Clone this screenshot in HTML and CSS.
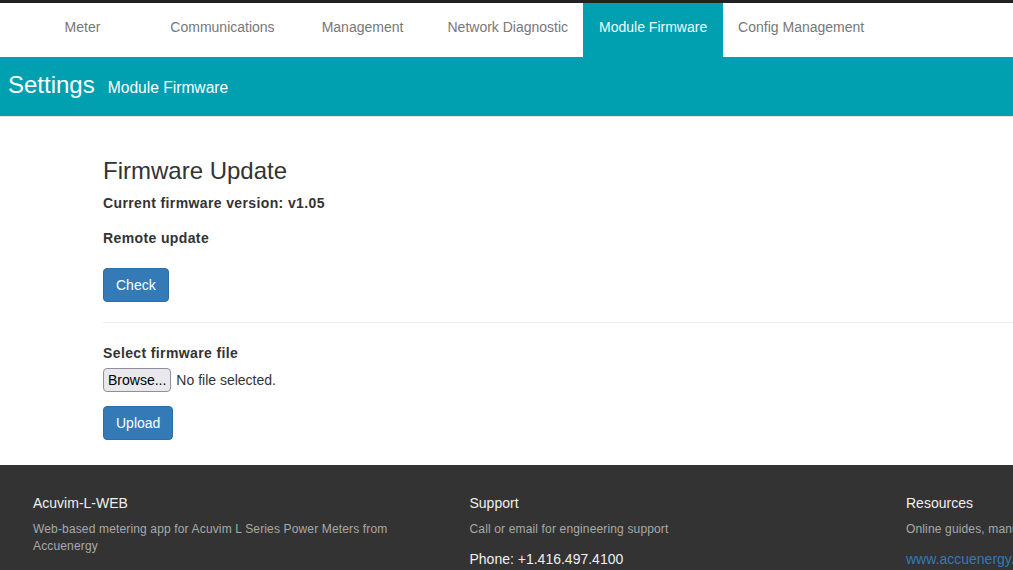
FILE: index.html
```html
<!DOCTYPE html>
<html lang="en">
<head>
<meta charset="utf-8">
<title>Settings - Module Firmware</title>
<link rel="stylesheet" href="styles.css">
</head>
<body>
<div class="topbar"></div>
<nav class="nav">
  <a class="nav-item">Meter</a>
  <a class="nav-item">Communications</a>
  <a class="nav-item">Management</a>
  <a class="nav-item">Network Diagnostic</a>
  <a class="nav-item active">Module Firmware</a>
  <a class="nav-item">Config Management</a>
</nav>
<header class="band">
  <h1 class="band-title">Settings</h1>
  <span class="band-sub">Module Firmware</span>
</header>
<main class="content">
  <h2 class="page-title">Firmware Update</h2>
  <p class="label">Current firmware version: v1.05</p>
  <p class="label label-remote">Remote update</p>
  <button class="btn">Check</button>
  <hr class="divider">
  <p class="label label-select">Select firmware file</p>
  <div class="file-row">
    <button class="browse">Browse...</button>
    <span class="file-name">No file selected.</span>
  </div>
  <button class="btn btn-upload">Upload</button>
</main>
<footer class="footer">
  <div class="footer-col">
    <h3 class="footer-head">Acuvim-L-WEB</h3>
    <p class="footer-text">Web-based metering app for Acuvim L Series Power Meters from Accuenergy</p>
  </div>
  <div class="footer-col">
    <h3 class="footer-head">Support</h3>
    <p class="footer-text">Call or email for engineering support</p>
    <p class="footer-phone">Phone: +1.416.497.4100</p>
  </div>
  <div class="footer-col">
    <h3 class="footer-head">Resources</h3>
    <p class="footer-text">Online guides, manuals and documentation</p>
    <a class="footer-link">www.accuenergy.com</a>
  </div>
</footer>
</body>
</html>
```
FILE: styles.css
```css
html, body {
  margin: 0;
  padding: 0;
  overflow: hidden;
  background: #fff;
}
body {
  font-family: "Liberation Sans", Arial, sans-serif;
  font-size: 14px;
  line-height: 20px;
  color: #333;
  width: 1013px;
}
.topbar {
  height: 3px;
  background: #222;
}
.nav {
  display: flex;
  height: 54px;
  padding-left: 12.5px;
  background: #fff;
}
.nav-item {
  min-width: 140px;
  box-sizing: border-box;
  padding: 14px 15px 0;
  text-align: center;
  color: #777;
  white-space: nowrap;
  cursor: pointer;
}
.nav-item.active {
  background: #00a0b0;
  color: #f2fbfc;
}
.band {
  display: flex;
  align-items: baseline;
  gap: 13px;
  height: 60px;
  box-sizing: border-box;
  padding: 14.5px 0 0 8px;
  background: #00a0b0;
  border-bottom: 1px solid #e4e4e4;
  color: #fff;
}
.band-title {
  margin: 0;
  font-size: 24px;
  line-height: 26.4px;
  font-weight: normal;
}
.band-sub {
  font-size: 15.6px;
}
.content {
  width: 1100px;
  padding: 40.5px 0 25px 103px;
}
.page-title {
  margin: 0 0 9px;
  font-size: 24px;
  line-height: 26.4px;
  font-weight: normal;
  color: #333;
}
.label {
  margin: 0;
  font-weight: bold;
  letter-spacing: 0.38px;
}
.label-remote {
  margin-top: 15px;
  margin-bottom: 20px;
}
.btn {
  display: block;
  padding: 6px 12px;
  font-family: inherit;
  font-size: 14px;
  line-height: 20px;
  color: #fff;
  background: #337ab7;
  border: 1px solid #2e6da4;
  border-radius: 4px;
}
.divider {
  margin: 20px 0;
  border: 0;
  border-top: 1px solid #eee;
}
.label-select {
  margin-bottom: 5px;
}
.file-row {
  display: flex;
  align-items: center;
  gap: 5px;
  margin-bottom: 14px;
}
.browse {
  height: 24px;
  padding: 0 4px;
  font-family: inherit;
  font-size: 14px;
  color: #000;
  background: #e9e9ed;
  border: 1px solid #8f8f9d;
  border-radius: 4px;
}
.file-name {
  color: #333;
}
.footer {
  display: grid;
  grid-template-columns: 436.5px 436.5px 436.5px;
  padding: 27.8px 0 0 33px;
  height: 200px;
  background: #333;
}
.footer-col {
  padding-right: 30px;
}
.footer-head {
  margin: 0 0 8px;
  font-size: 14px;
  line-height: 20px;
  font-weight: normal;
  color: #f0f0f0;
}
.footer-text {
  margin: 0 0 11px;
  font-size: 12px;
  line-height: 17px;
  letter-spacing: 0.15px;
  color: #a9a9a9;
}
.footer-phone {
  margin: 0;
  color: #f0f0f0;
}
.footer-link {
  color: #337ab7;
  white-space: nowrap;
}
```
